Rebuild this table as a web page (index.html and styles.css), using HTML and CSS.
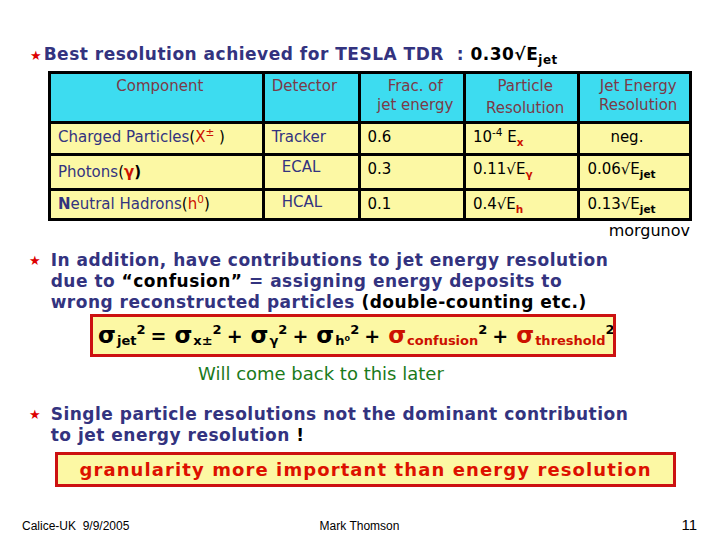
FILE: index.html
```html
<!DOCTYPE html>
<html lang="en">
<head>
<meta charset="utf-8" />
<title>Jet energy resolution</title>
<link rel="stylesheet" href="styles.css">
</head>
<body>
<div class="slide">

  <div class="title">
    <span class="star">★</span>Best resolution achieved for TESLA TDR&nbsp; : <span class="black">0.30√E<sub>jet</sub></span>
  </div>

  <table class="res-table">
    <tr class="head">
      <th class="c-comp">Component</th>
      <th class="c-det">Detector</th>
      <th class="c-frac">Frac. of<br>jet energy</th>
      <th class="c-part">Particle<br><span class="low">Resolution</span></th>
      <th class="c-jet">Jet Energy<br>Resolution</th>
    </tr>
    <tr class="r1">
      <td>Charged Particles<span class="black">(</span><span class="red">X<sup>±</sup></span><span class="black">&nbsp;)</span></td>
      <td>Tracker</td>
      <td class="num">0.6</td>
      <td class="num">10<sup>-4</sup> E<sub class="red">x</sub></td>
      <td class="num neg">neg.</td>
    </tr>
    <tr class="r2">
      <td class="photon">Photons<span class="black">(</span><b class="red">γ</b><b class="black">)</b></td>
      <td class="ind">ECAL</td>
      <td class="num">0.3</td>
      <td class="num">0.11√E<sub class="red">γ</sub></td>
      <td class="num">0.06√E<sub>jet</sub></td>
    </tr>
    <tr class="r3">
      <td><b>N</b>eutral Hadrons<span class="black">(</span><span class="red">h<sup>0</sup></span><span class="black">)</span></td>
      <td class="ind">HCAL</td>
      <td class="num">0.1</td>
      <td class="num">0.4√E<sub class="red">h</sub></td>
      <td class="num">0.13√E<sub>jet</sub></td>
    </tr>
  </table>

  <div class="credit">morgunov</div>

  <div class="bullet">
    <span class="star">★</span>
    <div>In addition, have contributions to jet energy resolution<br>
      due to <span class="black">“confusion”</span> = assigning energy deposits to<br>
      wrong reconstructed particles <span class="black">(double-counting etc.)</span></div>
  </div>

  <div class="formula"><span class="sig">σ</span><sub>jet</sub><sup>2</sup><span class="op">=</span><span class="sig">σ</span><sub>x±</sub><sup>2</sup><span class="op">+</span><span class="sig">σ</span><sub>γ</sub><sup>2</sup><span class="op">+</span><span class="sig">σ</span><sub>h⁰</sub><sup>2</sup><span class="op">+</span><span class="red"><span class="sig">σ</span><sub>confusion</sub></span><sup>2</sup><span class="op">+</span><span class="red"><span class="sig">σ</span><sub>threshold</sub></span><sup>2</sup></div>

  <div class="later">Will come back to this later</div>

  <div class="bullet b3">
    <span class="star">★</span>
    <div>Single particle resolutions not the dominant contribution<br>
      to jet energy resolution <span class="black">!</span></div>
  </div>

  <div class="punch">granularity more important than energy resolution</div>

  <div class="footer">
    <span>Calice-UK&nbsp; 9/9/2005</span>
    <span>Mark Thomson</span>
    <span class="page">11</span>
  </div>

</div>
</body>
</html>
```

FILE: styles.css
```css
body {
  margin: 0;
  background: #fff;
}

.slide {
  width: 720px;
  height: 540px;
  display: flex;
  flex-direction: column;
  font-family: "DejaVu Sans", Verdana, sans-serif;
  color: #33337f;
}

.black { color: #000; }
.red { color: #cc1100; }

.star {
  color: #dd0000;
  font-size: 13px;
}

sub, sup {
  font-size: 0.7em;
  line-height: 0;
}

/* title line */
.title {
  margin: 43px 0 0 30px;
  font-size: 17px;
  font-weight: bold;
  line-height: 22px;
  letter-spacing: 0.5px;
}
.title .star { margin-right: 2px; letter-spacing: 0; }

/* table */
.res-table {
  border-collapse: collapse;
  margin: 4px 0 0 48px;
  width: 644px;
  font-size: 15px;
}
.res-table th,
.res-table td {
  border: 3px solid #000;
  padding: 0 0 0 7px;
  text-align: left;
}
.res-table th {
  background: #3ddcf0;
  color: #7b3a48;
  font-weight: normal;
  vertical-align: top;
  padding-top: 3px;
  line-height: 19px;
  height: 44px;
  text-align: center;
}
.res-table td {
  background: #fcf8a4;
  vertical-align: top;
  padding-top: 4px;
}
.res-table .num { color: #000; }
.res-table td sub { font-weight: bold; }

.c-comp { width: 210px; }
.c-det { width: 87px; }
.c-frac { width: 98px; }
.c-part { width: 106px; }
.c-jet { width: 103px; }
.res-table th.c-det { text-align: left; }
.low { position: relative; top: 3px; }

.r1 td { height: 25px; }
.r2 td { height: 28px; }
.r3 td { height: 23px; }
.res-table td.photon { padding-top: 7px; height: 25px; }
.ind { padding-left: 17px !important; padding-top: 2px !important; }
.neg { padding-left: 30px !important; }

.credit {
  align-self: flex-end;
  margin: 0 30px 0 0;
  color: #000;
  font-size: 16px;
  line-height: 19px;
}

/* bullets */
.bullet {
  display: flex;
  gap: 8px;
  margin: 10px 0 0 29px;
  font-weight: bold;
  font-size: 17px;
  line-height: 21px;
  letter-spacing: 0.5px;
}
.bullet .star { letter-spacing: 0; line-height: 21px; }
.bullet > div { padding-left: 2px; }

/* formula box */
.formula {
  margin: 1px 0 0 90px;
  width: 515px;
  height: 37px;
  padding-left: 5px;
  border: 3px solid #cc1111;
  background: #fcf8a4;
  color: #000;
  font-weight: bold;
  font-size: 19px;
  line-height: 37px;
  white-space: nowrap;
  overflow: hidden;
}
.formula .sig { font-size: 23px; }
.formula .op { margin: 0 8px 0 5px; }
.formula sub,
.formula sup {
  font-size: 13px;
  vertical-align: baseline;
  position: relative;
}
.formula sub { top: 2px; margin-left: 1px; }
.formula sup { top: -9px; }

.later {
  margin: 6px 0 0 198px;
  color: #1a7a1a;
  font-size: 18px;
  line-height: 21px;
}

.b3 { margin-top: 20px; }

.punch {
  margin: 6px 0 0 55px;
  width: 615px;
  height: 29px;
  border: 3px solid #cc1111;
  background: #fcf8a4;
  color: #dd1100;
  font-weight: bold;
  font-size: 18px;
  line-height: 29px;
  text-align: center;
  letter-spacing: 1.1px;
}

.footer {
  display: grid;
  grid-template-columns: 1fr auto 1fr;
  align-items: baseline;
  margin: 29px 23px 0 22px;
  font-family: "Liberation Sans", Arial, sans-serif;
  font-size: 12px;
  color: #000;
}
.footer .page { font-size: 15px; justify-self: end; }
```
